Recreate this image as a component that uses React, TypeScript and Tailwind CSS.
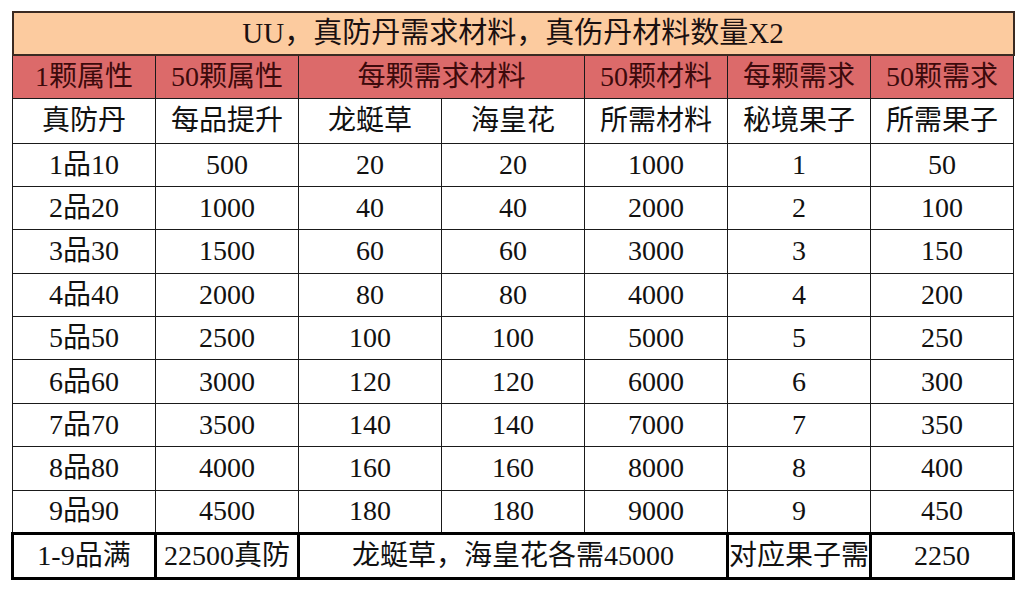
import React from 'react';

const font = { fontFamily: '"Liberation Serif", "Noto Sans CJK SC", serif' };

const rows = Array.from({ length: 9 }, (_, k) => {
    const i = k + 1;
    return [`${i}品${i * 10}`, 500 * i, 20 * i, 20 * i, 1000 * i, i, 50 * i];
});

const thin = 'border border-[#1a1a1a] p-0 text-center align-middle whitespace-nowrap overflow-hidden';
const thick = 'border-[3px] border-black p-0 text-center align-middle whitespace-nowrap overflow-hidden';

export default function App() {
    return (
        <div className="min-h-screen w-full bg-white pl-[11px] pt-[11px]" style={font}>
            <table className="table-fixed border-collapse w-[1000px] text-[28px] leading-none text-[#111]">
                <colgroup>
                    {[0, 1, 2, 3, 4, 5, 6].map((c) => (
                        <col key={c} className="w-[143px]" />
                    ))}
                </colgroup>
                <tbody>
                    <tr className="h-[43px] bg-[#fccb9f]">
                        <td colSpan={7} className="border-2 border-[#3a2a22] p-0 text-center align-middle text-[29px] text-[#1a1010]">
                            UU，真防丹需求材料，真伤丹材料数量X2
                        </td>
                    </tr>
                    <tr className="h-[43px] bg-[#dc6a6a] text-[#3d0a0c]">
                        <td className={thin}>1颗属性</td>
                        <td className={thin}>50颗属性</td>
                        <td colSpan={2} className={thin}>每颗需求材料</td>
                        <td className={thin}>50颗材料</td>
                        <td className={thin}>每颗需求</td>
                        <td className={thin}>50颗需求</td>
                    </tr>
                    <tr className="h-[45px]">
                        {['真防丹', '每品提升', '龙蜓草', '海皇花', '所需材料', '秘境果子', '所需果子'].map((t) => (
                            <td key={t} className={thin}>{t}</td>
                        ))}
                    </tr>
                    {rows.map((r, i) => (
                        <tr key={i} className="h-[43.4px]">
                            {r.map((v, j) => (
                                <td key={j} className={thin}>{v}</td>
                            ))}
                        </tr>
                    ))}
                    <tr className="h-[45px]">
                        <td className={thick}>1-9品满</td>
                        <td className={thick}>22500真防</td>
                        <td colSpan={3} className={thick}>龙蜓草，海皇花各需45000</td>
                        <td className={thick}>对应果子需</td>
                        <td className={thick}>2250</td>
                    </tr>
                </tbody>
            </table>
        </div>
    );
}
